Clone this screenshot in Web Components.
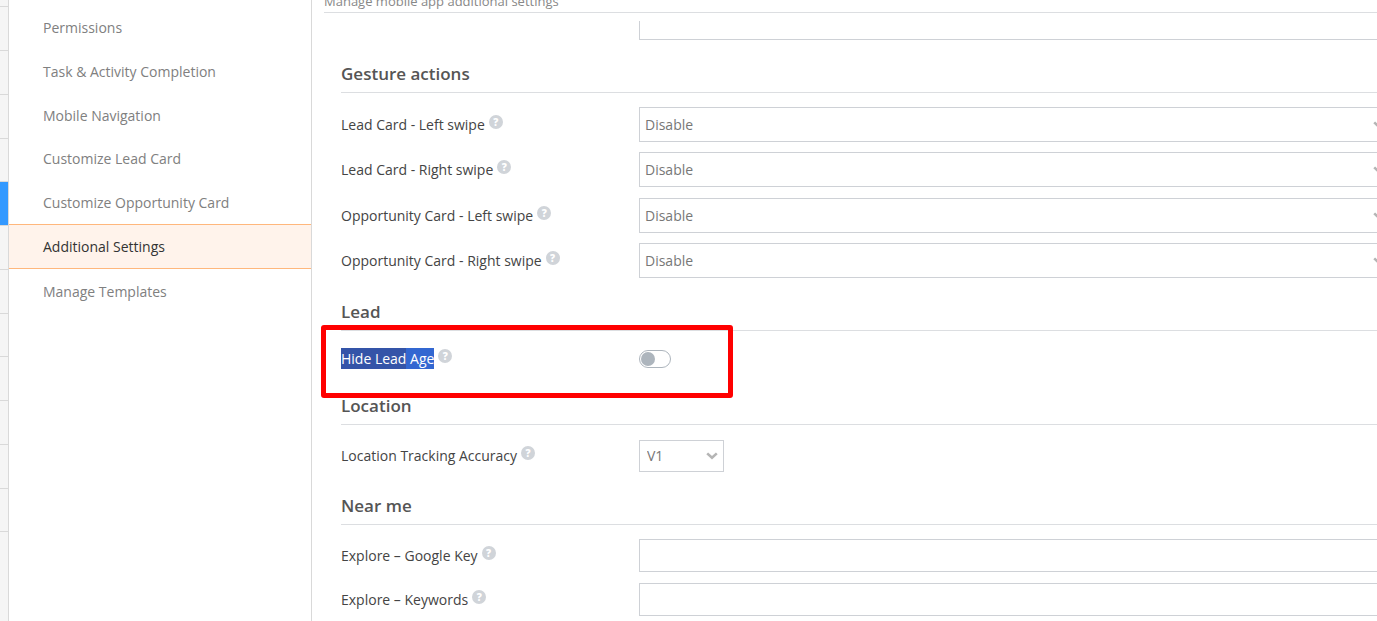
<!DOCTYPE html>
<html lang="en">
<head>
<meta charset="utf-8">
<title>Additional Settings</title>
<style>
  html, body {
    height: 100%;
    margin: 0;
  }

  body {
    background: #fff;
    font-family: "Open Sans", "Noto Sans", sans-serif;
    font-size: 14px;
    line-height: 20px;
    overflow: hidden;
  }
</style>
</head>
<body>

<settings-layout>
  <icon-rail slot="rail" items="13" active="5"></icon-rail>
  <side-menu slot="menu">
    <menu-item>Permissions</menu-item>
    <menu-item>Task &amp; Activity Completion</menu-item>
    <menu-item>Mobile Navigation</menu-item>
    <menu-item>Customize Lead Card</menu-item>
    <menu-item>Customize Opportunity Card</menu-item>
    <menu-item active>Additional Settings</menu-item>
    <menu-item>Manage Templates</menu-item>
  </side-menu>
  <span slot="description">Manage mobile app additional settings</span>

  <setting-row type="text" name="Value" clipped></setting-row>
  <settings-section heading="Gesture actions">
    <setting-row type="select" label="Lead Card - Left swipe" value="Disable"></setting-row>
    <setting-row type="select" label="Lead Card - Right swipe" value="Disable"></setting-row>
    <setting-row type="select" label="Opportunity Card - Left swipe" value="Disable"></setting-row>
    <setting-row type="select" label="Opportunity Card - Right swipe" value="Disable"></setting-row>
  </settings-section>
  <settings-section heading="Lead">
    <setting-row type="toggle" label="Hide Lead Age" marked="Hide Lead"></setting-row>
  </settings-section>
  <settings-section heading="Location">
    <setting-row type="select" label="Location Tracking Accuracy" value="V1" compact></setting-row>
  </settings-section>
  <settings-section heading="Near me">
    <setting-row type="text" label="Explore – Google Key"></setting-row>
    <setting-row type="text" label="Explore – Keywords"></setting-row>
  </settings-section>
</settings-layout>

<script>
class SettingsLayout extends HTMLElement {
  constructor() {
    super();
    this.attachShadow({ mode: 'open' });
  }

  connectedCallback() {
    this.shadowRoot.innerHTML = `
      <style>
        :host {
          display: grid;
          grid-template-columns: 9px 303px minmax(0, 1fr);
          height: 100%;
          overflow: hidden;
        }

        main {
          overflow: hidden;
          padding-left: 12px;
        }

        header {
          display: flex;
          align-items: flex-end;
          height: 12px;
          border-bottom: 1px solid #dcdee1;
          color: #888;
          font-size: 13px;
          line-height: 22px;
          white-space: nowrap;
        }

        /* The form is a little wider than the visible pane */
        .form {
          margin: 8px -14px 0 17px;
        }
      </style>
      <slot name="rail"></slot>
      <slot name="menu"></slot>
      <main>
        <header><slot name="description"></slot></header>
        <div class="form"><slot></slot></div>
      </main>
    `;
  }
}

class IconRail extends HTMLElement {
  constructor() {
    super();
    this.attachShadow({ mode: 'open' });
  }

  connectedCallback() {
    const count = Number(this.getAttribute('items'));
    const active = Number(this.getAttribute('active'));
    let cells = '';
    for (let i = 1; i <= count; i++) {
      cells += `<div class="cell${i === active + 1 ? ' active' : ''}"></div>`;
    }

    this.shadowRoot.innerHTML = `
      <style>
        :host {
          display: block;
          background: #f5f5f5;
          border-right: 1px solid #d9d9d9;
        }

        .cell {
          box-sizing: border-box;
          height: 44px;
          border-bottom: 1px solid #d9d9d9;
        }

        .cell:first-of-type { height: 7px; }
        .cell:nth-of-type(4n + 5) { height: 43px; }
        .cell.active {
          background: #3399ff;
          background-clip: padding-box;
        }
      </style>
      ${cells}
    `;
  }
}

class SideMenu extends HTMLElement {
  constructor() {
    super();
    this.attachShadow({ mode: 'open' });
  }

  connectedCallback() {
    this.shadowRoot.innerHTML = `
      <style>
        :host {
          display: block;
          padding-top: 5px;
          border-right: 1px solid #d9d9d9;
        }

        ::slotted(:nth-child(4)) { height: 43px; }
      </style>
      <nav><slot></slot></nav>
    `;
  }
}

class MenuItem extends HTMLElement {
  constructor() {
    super();
    this.attachShadow({ mode: 'open' });
  }

  connectedCallback() {
    this.shadowRoot.innerHTML = `
      <style>
        :host {
          display: flex;
          height: 44px;
          color: #808080;
        }

        :host([active]) {
          box-sizing: border-box;
          height: 45px;
          border: solid #ffb77c;
          border-width: 1px 0;
          background: #fff3eb;
          color: #333;
        }

        a {
          display: flex;
          flex: 1;
          align-items: center;
          padding: 1px 0 0 34px;
          color: inherit;
          text-decoration: none;
        }
      </style>
      <a href="#"><slot></slot></a>
    `;
  }
}

class SettingsSection extends HTMLElement {
  constructor() {
    super();
    this.attachShadow({ mode: 'open' });
  }

  connectedCallback() {
    this.shadowRoot.innerHTML = `
      <style>
        :host {
          display: block;
          padding-top: 22px;
        }

        h2 {
          margin: 0 0 14px;
          padding-bottom: 6px;
          border-bottom: 1px solid #dcdee1;
          color: #555;
          font-size: 17px;
          font-weight: 600;
          line-height: 24px;
        }

        ::slotted(setting-row:nth-child(even)) { margin-top: 10px; }
        ::slotted(setting-row:nth-child(odd):not(:first-child)),
        ::slotted(setting-row[type="text"]:not(:first-child)) { margin-top: 11px; }
      </style>
      <h2>${this.getAttribute('heading')}</h2>
      <slot></slot>
    `;
  }
}

class SettingRow extends HTMLElement {
  constructor() {
    super();
    this.attachShadow({ mode: 'open' });
  }

  connectedCallback() {
    this.render();
  }

  getLabel() {
    const label = this.getAttribute('label');
    const marked = this.getAttribute('marked');
    if (!label) {
      return '<div></div>';
    }
    const text = marked
      ? `<span class="selected"><span>${marked}</span>${label.slice(marked.length)}</span>`
      : label;
    return `
      <div class="caption">
        <label for="control">${text}</label>
        <button type="button" aria-label="Help">?</button>
      </div>
    `;
  }

  getControl() {
    const type = this.getAttribute('type');
    if (type === 'select') {
      return `
        <div class="select">
          <select id="control"><option>${this.getAttribute('value')}</option></select>
          <svg width="12" height="8" viewBox="0 0 12 8" aria-hidden="true">
            <path d="M1.2 1.4 L6 5.8 L10.8 1.4" fill="none" stroke="#b5b5b5" stroke-width="2.6"/>
          </svg>
        </div>
      `;
    }
    if (type === 'toggle') {
      return '<input id="control" type="checkbox" role="switch">';
    }
    return `<input id="control" type="text" ${this.hasAttribute('name') ? `aria-label="${this.getAttribute('name')}"` : ''}>`;
  }

  render() {
    this.shadowRoot.innerHTML = `
      <style>
        :host {
          display: grid;
          grid-template-columns: 298px minmax(0, 1fr);
          align-items: center;
          color: #444;
        }

        :host([compact]) { min-height: 33px; }
        :host([marked]) {
          position: relative;
          min-height: 27px;
        }

        /* Scrolled partly under the header, only the lower edge shows */
        :host([clipped]) {
          height: 19px;
          align-content: end;
          overflow: hidden;
        }

        .caption {
          display: flex;
          align-items: center;
          gap: 4px;
        }

        button {
          width: 14px;
          height: 14px;
          margin-bottom: 5px;
          padding: 0;
          border: 0;
          border-radius: 50%;
          background: #d0d4d9;
          color: #fff;
          font: 800 10px/14px "Open Sans", sans-serif;
          text-align: center;
        }

        select,
        input[type="text"] {
          box-sizing: border-box;
          width: 100%;
          height: 33px;
          margin: 0;
          border: 1px solid #ced1d6;
          border-radius: 0;
          background: transparent;
          color: #777;
          font: inherit;
        }

        select {
          appearance: none;
          grid-area: 1 / 1;
          height: 35px;
          padding: 0 20px 0 5px;
        }

        .select {
          display: grid;
          align-items: center;
        }

        .select svg {
          grid-area: 1 / 1;
          justify-self: end;
          margin-right: 6px;
          pointer-events: none;
        }

        :host([compact]) .select { width: 85px; }
        :host([compact]) select {
          height: 32px;
          padding-left: 7px;
        }

        input[type="checkbox"] {
          appearance: none;
          display: flex;
          align-items: center;
          box-sizing: border-box;
          width: 32px;
          height: 18px;
          margin: 0;
          padding: 0 1px;
          border: 1px solid #adb5bd;
          border-radius: 9px;
          background: #fff;
        }

        input[type="checkbox"]::before {
          content: "";
          width: 14px;
          height: 14px;
          border-radius: 50%;
          background: #adb5bd;
        }

        input[type="checkbox"]:checked { justify-content: flex-end; }

        .selected,
        .selected span {
          display: inline-block;
          background: #3367d1;
          color: #fff;
          line-height: 21px;
        }

        .selected span { background: #3454a8; }
        .selected { white-space: pre; }

        .frame {
          position: absolute;
          top: -20px;
          left: -20px;
          box-sizing: border-box;
          width: 412px;
          height: 73px;
          border: 5px solid #f00;
          border-radius: 3px;
          pointer-events: none;
        }
      </style>
      ${this.getLabel()}
      ${this.getControl()}
      ${this.hasAttribute('marked') ? '<div class="frame"></div>' : ''}
    `;
  }
}

customElements.define('settings-layout', SettingsLayout);
customElements.define('icon-rail', IconRail);
customElements.define('side-menu', SideMenu);
customElements.define('menu-item', MenuItem);
customElements.define('settings-section', SettingsSection);
customElements.define('setting-row', SettingRow);
</script>
</body>
</html>
